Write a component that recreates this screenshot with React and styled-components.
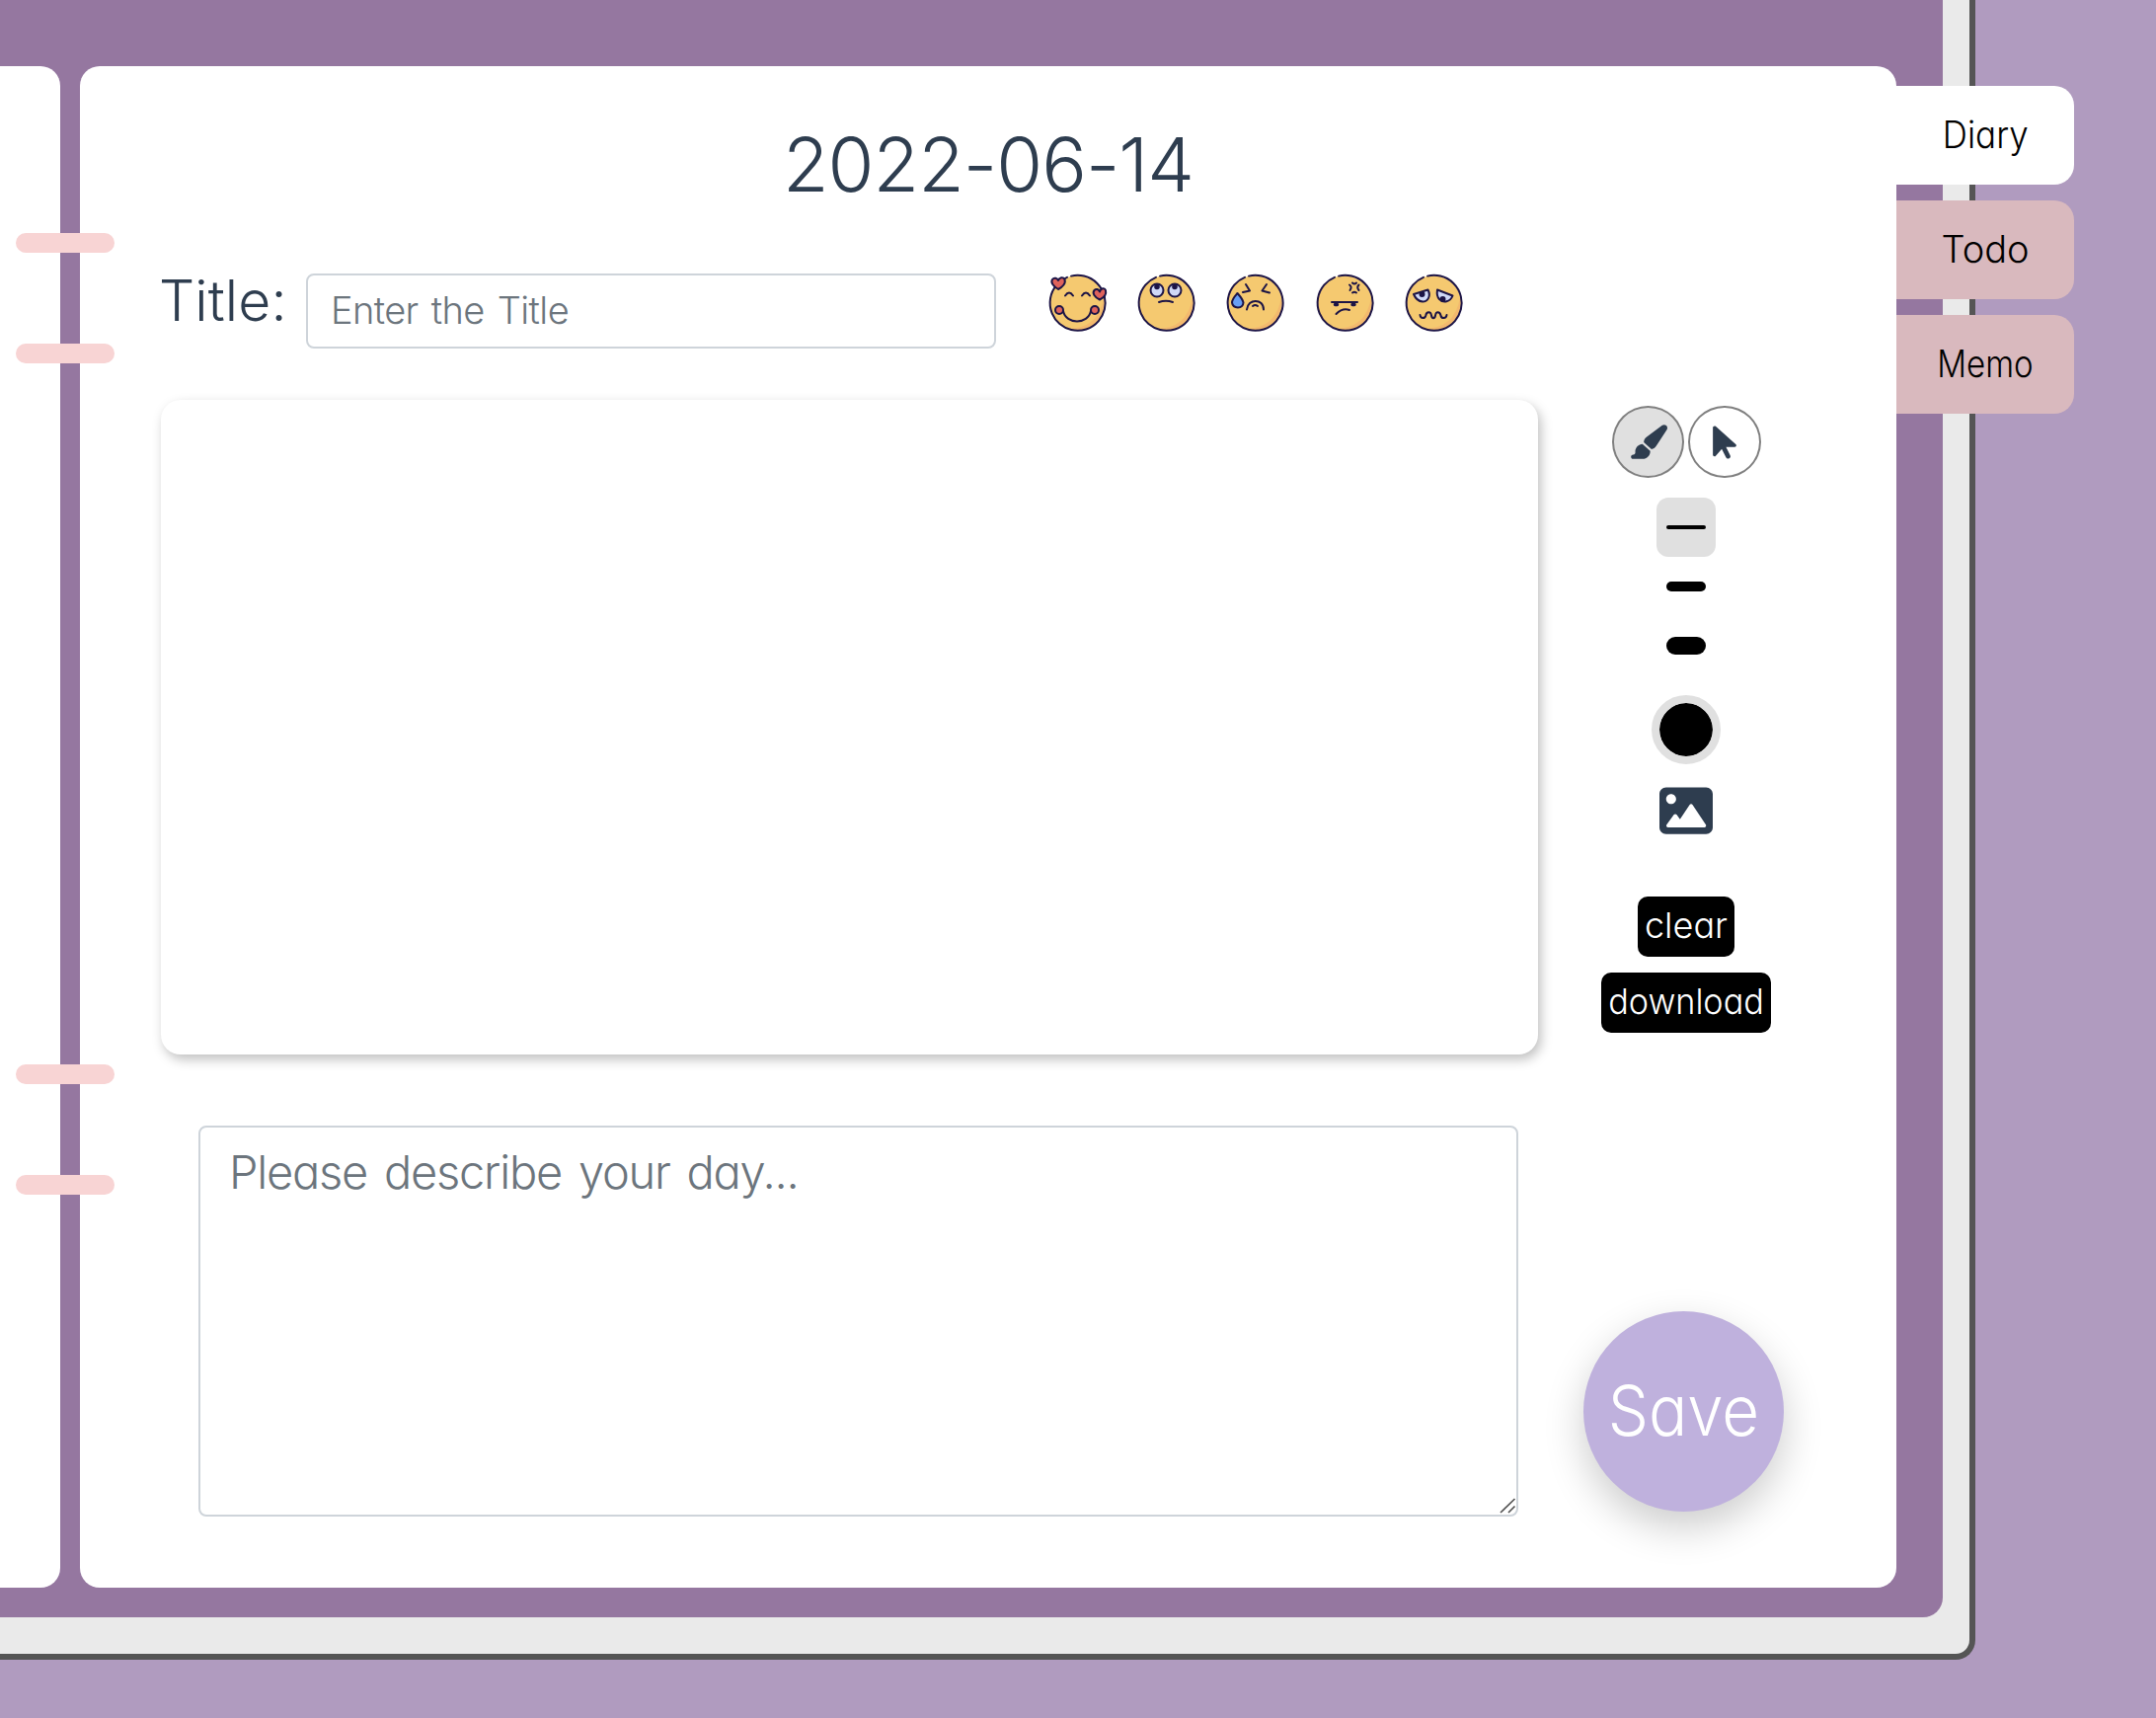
import React from "react";
import styled, { createGlobalStyle } from "styled-components";
import { FaPaintbrush, FaArrowPointer } from "react-icons/fa6";

const ink = "#2e3d4f";

const Global = createGlobalStyle`
  * { box-sizing: border-box; }
  body {
    margin: 0;
    overflow: hidden;
    background: #b09bbf;
    font-family: "Inter", "Liberation Sans", sans-serif;
    font-weight: 300;
    font-feature-settings: "cv11";
    color: ${ink};
  }
  button, input, textarea { font: inherit; font-feature-settings: inherit; letter-spacing: inherit; }
`;

const Desk = styled.main`
  position: relative;
  width: 2184px;
  height: 1740px;
  overflow: hidden;
  background: #b09bbf;
`;

const Cover = styled.div`
  width: 2001px;
  height: 1681px;
  background: #eaeaea;
  border: solid #555;
  border-width: 0 6px 6px 0;
  border-bottom-right-radius: 20px;
`;

const Binder = styled.div`
  position: relative;
  display: flex;
  gap: 20px;
  width: 1968px;
  height: 1638px;
  padding: 67px 47px 30px 0;
  background: #9577a0;
  border-bottom-right-radius: 20px;
`;

const LeftPage = styled.section`
  flex: none;
  width: 61px;
  background: #fff;
  border-radius: 0 20px 20px 0;
`;

const Page = styled.section`
  flex: none;
  width: 1840px;
  display: flex;
  flex-direction: column;
  padding: 49px 82px 0;
  background: #fff;
  border-radius: 20px;
`;

const Rings = styled.div`
  position: absolute;
  left: 16px;
  top: ${(p) => p.$top}px;
  display: grid;
  gap: 92px;
`;

const Ring = styled.span`
  width: 100px;
  height: 20px;
  border-radius: 10px;
  background: #f8d4d4;
`;

const Tabs = styled.nav`
  position: absolute;
  left: 1921px;
  top: 87px;
  display: grid;
  gap: 16px;
`;

const Tab = styled.a`
  width: 180px;
  height: 100px;
  line-height: 98px;
  text-align: center;
  font-size: 38px;
  color: #000;
  background: ${(p) => (p.$active ? "#fff" : "#d9b9be")};
  border-radius: 0 20px 20px 0;
`;

const Caption = styled.span`
  display: inline-block;
  transform: scaleX(${(p) => p.$stretch});
`;

const DateHeading = styled.h1`
  margin: 0;
  height: 100px;
  line-height: 100px;
  text-align: center;
  font-size: 76px;
  font-weight: 300;
  letter-spacing: -1px;
`;

const TitleRow = styled.div`
  display: flex;
  align-items: flex-start;
  height: 76px;
  margin-top: 61px;
`;

const TitleLabel = styled.label`
  width: 149px;
  margin-left: -2px;
  line-height: 56px;
  font-size: 57px;
  letter-spacing: 0.1px;
  white-space: nowrap;
`;

const TitleInput = styled.input`
  width: 699px;
  height: 76px;
  padding: 0 24px 2px 23px;
  font-size: 38px;
  letter-spacing: -0.6px;
  word-spacing: 3px;
  border: 2px solid #ced4da;
  border-radius: 8px;
  outline: none;
  &::placeholder { color: #6c757d; opacity: 1; }
`;

const Moods = styled.div`
  display: flex;
  gap: 30.2px;
  margin: 0 0 0 52px;
`;

const MoodFace = styled.svg`
  width: 60px;
  height: 60px;
  overflow: visible;
`;

const Sketch = styled.div`
  display: flex;
  margin-top: 52px;
`;

const Canvas = styled.div`
  flex: none;
  width: 1395px;
  height: 663px;
  border-radius: 20px;
  background: #fff;
  box-shadow: 3px 5px 12px rgba(0, 0, 0, 0.25);
`;

const Tools = styled.div`
  flex: none;
  display: flex;
  flex-direction: column;
  align-items: center;
  width: 300px;
  padding-top: 6px;
`;

const ToolPair = styled.div`
  display: flex;
  gap: 4px;
  margin-bottom: 20px;
`;

const RoundTool = styled.button`
  display: flex;
  align-items: center;
  justify-content: center;
  width: 73.5px;
  height: 73px;
  padding: 0;
  color: ${ink};
  font-size: ${(p) => p.$size}px;
  background: ${(p) => (p.$active ? "#e0e0e0" : "#fff")};
  border: 2px solid #808080;
  border-radius: 50%;
`;

const Stroke = styled.button`
  display: flex;
  align-items: center;
  justify-content: center;
  width: 60px;
  height: 60px;
  padding: 0;
  border: 0;
  border-radius: 12px;
  background: ${(p) => (p.$active ? "#e0e0e0" : "transparent")};
  &::before {
    content: "";
    width: 40px;
    height: ${(p) => p.$weight}px;
    border-radius: 9px;
    background: #000;
  }
`;

const Swatch = styled.button`
  width: 70px;
  height: 70px;
  margin: 20px 0 22px;
  padding: 0;
  border: 8px solid #e0e0e0;
  border-radius: 50%;
  background: #000;
  background-clip: padding-box;
`;

const Picture = styled.svg`
  width: 54px;
  height: 50px;
  margin-bottom: 62px;
  fill: ${ink};
`;

const Action = styled.button`
  width: ${(p) => p.$width}px;
  height: 61px;
  margin-bottom: 16px;
  padding: 0 0 3px;
  font-size: 36px;
  color: #fff;
  background: #000;
  border: 0;
  border-radius: 10px;
  white-space: nowrap;
`;

const Entry = styled.div`
  display: flex;
  margin: 72px 0 0 38px;
`;

const StoryBox = styled.div`
  position: relative;
  flex: none;
  width: 1337px;
  height: 396px;
`;

const Story = styled.textarea`
  display: block;
  width: 100%;
  height: 100%;
  padding: 15px 29px;
  line-height: 60px;
  font-size: 47px;
  letter-spacing: -1.25px;
  word-spacing: 5px;
  border: 2px solid #ced4da;
  border-radius: 8px;
  outline: none;
  resize: none;
  &::placeholder { color: #6c757d; opacity: 1; }
`;

const Grip = styled.svg`
  position: absolute;
  right: 2px;
  bottom: 3px;
  width: 17px;
  height: 16px;
  stroke: #555;
  stroke-width: 1.7;
`;

const Save = styled.button`
  flex: none;
  width: 203px;
  height: 203px;
  margin: 188px 0 0 66px;
  padding: 0 0 3px;
  font-size: 71px;
  color: #fff;
  background: #bfb1dd;
  border: 0;
  border-radius: 50%;
  box-shadow: 0 16px 40px rgba(0, 0, 0, 0.2);
`;

const Face = ({ children }) => (
  <MoodFace viewBox="0 0 60 60" fill="none" stroke="#1c1446" strokeWidth="2" strokeLinecap="round" strokeLinejoin="round">
    <circle cx="30" cy="30" r="28" fill="#f5c970" stroke="none" />
    <path d="M57 24A28 28 0 0 1 20 56Q52 56 57 24Z" fill="#f2a96c" opacity=".5" stroke="none" />
    <path d="M24 2.600A28 28 0 1 1 20 3.900" />
    {children}
  </MoodFace>
);

const InLove = () => (
  <Face>
    <path d="M11 16C6 13 3 9 5 6C7 3.500 10 5 11 7C12 4 16 3 17.500 6C19 10 15 14 11 16Z" fill="#df625b" />
    <path d="M53 26.500C48 24 45 20 47.500 17C49.500 15 52 16 53 18.500C54 15 58 14 59 17C60 21 57 24.500 53 26.500Z" fill="#df625b" />
    <path d="M18 22.500Q22 16.500 26 22.500M35 22.500Q39 16.500 43 22.500" />
    <circle cx="12" cy="37" r="4" fill="#df625b" />
    <circle cx="48" cy="37" r="4" fill="#df625b" />
    <path d="M16 38C19 52 41 52 44 38" />
  </Face>
);

const EyeRoll = () => (
  <Face>
    <circle cx="21" cy="17" r="6.500" fill="#cfd8f7" />
    <circle cx="39" cy="17" r="6.500" fill="#cfd8f7" />
    <circle cx="21" cy="13.500" r="1.800" fill="#1c1446" />
    <circle cx="39" cy="13.500" r="1.800" fill="#1c1446" />
    <path d="M23 29Q30 26.500 37 29" />
  </Face>
);

const Crying = () => (
  <Face>
    <path d="M21 11L25 17.500L18 19M42 11L37.500 17.500L45 19.500" />
    <path d="M12.500 20C9 24 7 26 7 29.500C8 36 18 36 18.500 29.500C18 26 16 24 12.500 20Z" fill="#689ff5" />
    <path d="M22 36.500C23 25 39 25 39 36.500M28 33Q30.500 31 33 33" />
  </Face>
);

const Angry = () => (
  <Face>
    <path d="M17 29H43" />
    <path d="M20.500 31.500H22.500M38 31.500H40" strokeWidth="3.500" />
    <path d="M21.500 41Q28 34.500 35 37" />
    <path d="M35 11.500Q38 13.500 35.500 17M44.500 11.500Q42 14 44.500 17M38 9.500Q40 11.500 42 9.500M38 19.500Q40 18 42 19.500" />
  </Face>
);

const Weary = () => (
  <Face>
    <path d="M10 21L24.500 16.500C28 23.500 24 28.500 19 28.500Q13 28 10 21Z" fill="#cfd8f7" />
    <path d="M34 16.500L49.500 22.500C47 29 40 30 36 26Q33 23 34 16.500Z" fill="#cfd8f7" />
    <circle cx="18.500" cy="21" r="2" fill="#1c1446" />
    <circle cx="39.500" cy="26" r="2" fill="#1c1446" />
    <path d="M16.500 42C17 46 21.500 46 22.300 42.500C23 38 27.500 38 28 42.500C28.500 46 31.500 46 32 42.500C32.500 38 36.500 38 37.500 42.500C38 46 43 46 43.500 42" />
  </Face>
);

export default function App() {
  return (
    <>
      <Global />
      <Desk>
        <Cover>
          <Binder>
            <LeftPage />
            <Page>
              <DateHeading>2022-06-14</DateHeading>
              <TitleRow>
                <TitleLabel htmlFor="title">Title:</TitleLabel>
                <TitleInput id="title" placeholder="Enter the Title" />
                <Moods>
                  <InLove />
                  <EyeRoll />
                  <Crying />
                  <Angry />
                  <Weary />
                </Moods>
              </TitleRow>
              <Sketch>
                <Canvas />
                <Tools>
                  <ToolPair>
                    <RoundTool $active $size={39}><FaPaintbrush /></RoundTool>
                    <RoundTool $size={38}><FaArrowPointer /></RoundTool>
                  </ToolPair>
                  <Stroke $active $weight={4} />
                  <Stroke $weight={10} />
                  <Stroke $weight={18} />
                  <Swatch />
                  <Picture viewBox="0 19 512 474">
                    <path d="M448 32H64C28.650 32 0 60.650 0 96v320c0 35.350 28.650 64 64 64h384c35.350 0 64-28.650 64-64V96C512 60.650 483.300 32 448 32zM112 96c26.510 0 48 21.490 48 48S138.500 192 112 192s-48-21.490-48-48S85.480 96 112 96zM446.100 407.600C443.300 412.800 437.900 416 432 416H82c-6 0-11.500-3.400-14.260-8.750c-2.730-5.370-2.210-11.810 1.340-16.680l70-96C142.100 290.400 146.900 288 152 288s9.900 2.400 12.930 6.570l32.460 44.510l93.300-139.100C293.700 194.700 298.700 192 304 192s10.350 2.670 13.310 7.120l128 192C448.600 396 448.900 402.300 446.100 407.600z" />
                  </Picture>
                  <Action $width={98}><Caption $stretch={1}>clear</Caption></Action>
                  <Action $width={172}><Caption $stretch={0.95}>download</Caption></Action>
                </Tools>
              </Sketch>
              <Entry>
                <StoryBox>
                  <Story placeholder="Please describe your day..." />
                  <Grip viewBox="0 0 17 16"><path d="M1 15L15.500 1M9 15L15.500 8.500" /></Grip>
                </StoryBox>
                <Save><Caption $stretch={0.92}>Save</Caption></Save>
              </Entry>
            </Page>
            <Rings $top={236}><Ring /><Ring /></Rings>
            <Rings $top={1078}><Ring /><Ring /></Rings>
          </Binder>
        </Cover>
        <Tabs>
          <Tab $active><Caption $stretch={0.92}>Diary</Caption></Tab>
          <Tab><Caption $stretch={1}>Todo</Caption></Tab>
          <Tab><Caption $stretch={0.87}>Memo</Caption></Tab>
        </Tabs>
      </Desk>
    </>
  );
}
